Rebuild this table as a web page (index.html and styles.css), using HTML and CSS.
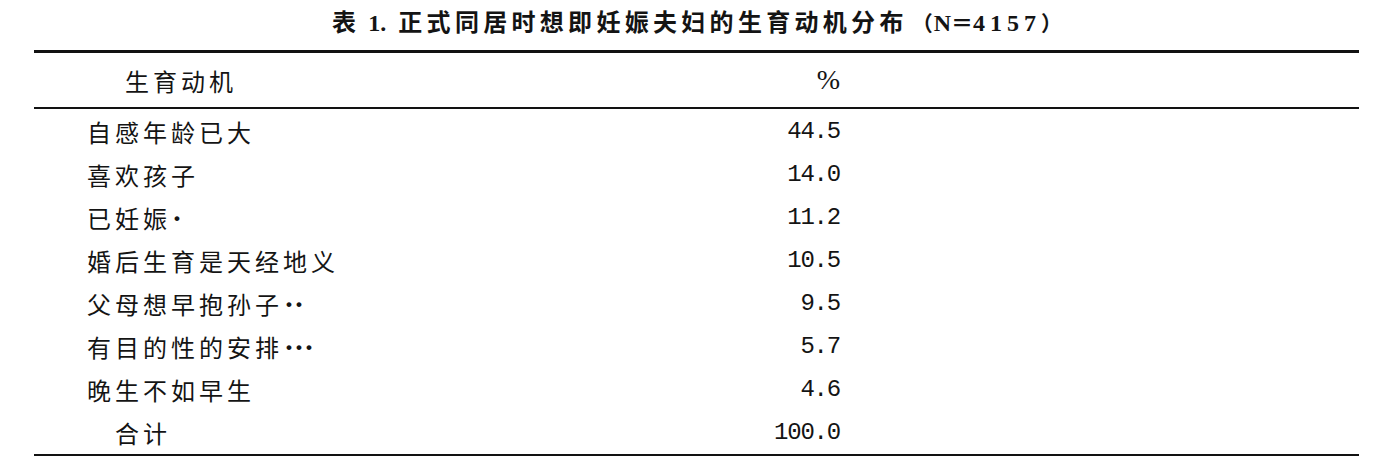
FILE: index.html
```html
<!DOCTYPE html>
<html lang="zh-CN">
<head>
<meta charset="utf-8">
<title>表1 生育动机分布</title>
<link rel="stylesheet" href="styles.css">
</head>
<body>
<div class="page">
  <h1 class="title"><span class="t-cn">表</span><span class="t-num">1.</span><span class="t-cn t-main">正式同居时想即妊娠夫妇的生育动机分布</span><span class="t-paren">（<span class="t-lat">N</span><span class="t-eq">＝</span><span class="t-lat t-digits">4157</span>）</span></h1>
  <div class="table">
    <div class="row head">
      <div class="label head-label">生育动机</div>
      <div class="value pct">%</div>
    </div>
    <div class="body">
      <div class="row"><div class="label">自感年龄已大</div><div class="value">44.5</div></div>
      <div class="row"><div class="label">喜欢孩子</div><div class="value">14.0</div></div>
      <div class="row"><div class="label">已妊娠<span class="mark">•</span></div><div class="value">11.2</div></div>
      <div class="row"><div class="label">婚后生育是天经地义</div><div class="value">10.5</div></div>
      <div class="row"><div class="label">父母想早抱孙子<span class="mark">••</span></div><div class="value">9.5</div></div>
      <div class="row"><div class="label">有目的性的安排<span class="mark">•••</span></div><div class="value">5.7</div></div>
      <div class="row"><div class="label">晚生不如早生</div><div class="value">4.6</div></div>
      <div class="row"><div class="label total">合计</div><div class="value">100.0</div></div>
    </div>
  </div>
</div>
</body>
</html>
```
FILE: styles.css
```css
html, body {
  margin: 0;
  padding: 0;
  background: #ffffff;
}

body {
  width: 1384px;
  height: 464px;
  overflow: hidden;
  color: #141414;
  font-family: "Noto Sans CJK SC", "Noto Sans", sans-serif;
}

.page {
  display: flex;
  flex-direction: column;
}

.title {
  margin: 0;
  height: 50px;
  padding-left: 332px;
  font-size: 24px;
  line-height: 42px;
  font-weight: 700;
  white-space: nowrap;
  display: flex;
  align-items: baseline;
}

.t-cn {
  font-family: "Noto Sans CJK SC", sans-serif;
  letter-spacing: 4.3px;
}

.t-num {
  font-family: "Liberation Serif", serif;
  font-size: 24px;
  margin-left: 8px;
  margin-right: 12px;
}

.t-paren {
  font-family: "Noto Sans CJK SC", sans-serif;
  font-size: 21px;
  margin-left: 4px;
}

.t-lat {
  font-family: "Liberation Serif", serif;
  font-size: 24px;
  margin-left: 1px;
}

.t-eq {
  font-size: 22px;
}

.t-digits {
  letter-spacing: 5px;
  margin-left: 0;
}

.table {
  margin-left: 34px;
  width: 1325px;
  border-top: 3px solid #121212;
  border-bottom: 2px solid #121212;
}

.row {
  display: flex;
  height: 43px;
  align-items: center;
}

.row.head {
  height: 54px;
  border-bottom: 2px solid #121212;
}

.body {
  padding-top: 1px;
}

.label {
  width: 602px;
  padding-left: 53px;
  box-sizing: border-box;
  font-size: 24px;
  letter-spacing: 4px;
  white-space: nowrap;
}

.head-label {
  padding-left: 91px;
}

.label.total {
  padding-left: 81px;
}

.value {
  width: 204px;
  text-align: right;
  font-family: "Liberation Mono", monospace;
  font-size: 24px;
  letter-spacing: -1.2px;
  margin-right: 1px;
}

.pct {
  font-family: "Liberation Serif", serif;
  font-size: 28px;
  font-weight: 400;
  letter-spacing: 0;
}

.mark {
  font-family: "Liberation Sans", sans-serif;
  font-size: 17px;
  font-weight: 700;
  letter-spacing: 4px;
  vertical-align: 4px;
  margin-left: 3px;
}
```
